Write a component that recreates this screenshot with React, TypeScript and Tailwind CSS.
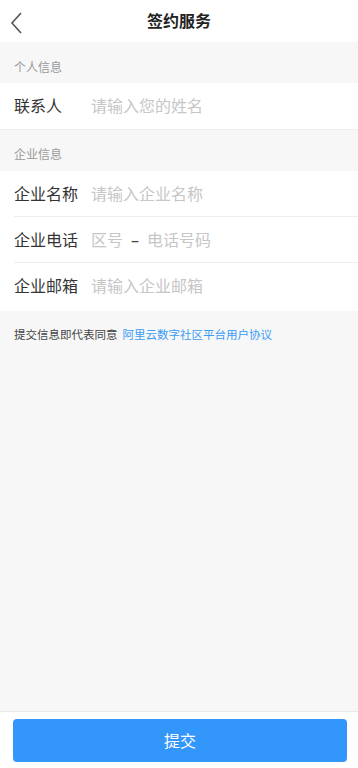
import React from "react";

const font = { fontFamily: '"Noto Sans", "Noto Sans CJK SC", sans-serif' };

function Row({ label, placeholder, divider = true }: { label: string; placeholder: React.ReactNode; divider?: boolean }) {
  return (
    <div className="pl-[14px]">
      <div className={`flex items-center h-[46px] ${divider ? "border-b border-[#eeeeee]" : ""}`}>
        <div className="w-[77px] text-[16px] text-[#333333]">{label}</div>
        <div className="text-[16px] text-[#c6c6c6]">{placeholder}</div>
      </div>
    </div>
  );
}

export default function App() {
  return (
    <div className="w-[358px] h-[768px] flex flex-col bg-[#f7f7f7]" style={font}>
      <div className="relative h-[42px] bg-white flex items-center justify-center shrink-0">
        <svg className="absolute left-[9px] top-[11px]" width="16" height="24" viewBox="0 0 16 24" fill="none">
          <path d="M12 2 L3 12 L12 22" stroke="#555555" strokeWidth="1.6" />
        </svg>
        <span className="text-[16px] font-bold text-[#222222]">签约服务</span>
      </div>
      <div className="h-[41px] flex items-center pl-[14px] pt-[10px] text-[12px] text-[#999999]">个人信息</div>
      <div className="bg-white">
        <Row label="联系人" placeholder="请输入您的姓名" divider={false} />
      </div>
      <div className="h-[42px] flex items-center pl-[14px] pt-[8px] text-[12px] text-[#999999] border-t border-[#eeeeee]">企业信息</div>
      <div className="bg-white pb-[2px]">
        <Row label="企业名称" placeholder="请输入企业名称" />
        <Row
          label="企业电话"
          placeholder={
            <span className="flex items-center">
              <span>区号</span>
              <span className="mx-[8px] text-[#444444]">–</span>
              <span>电话号码</span>
            </span>
          }
        />
        <Row label="企业邮箱" placeholder="请输入企业邮箱" divider={false} />
      </div>
      <div className="pl-[14px] pt-[15px] text-[11.5px] flex gap-[5px]">
        <span className="text-[#444444]">提交信息即代表同意</span>
        <span className="text-[#3a9bf6]">阿里云数字社区平台用户协议</span>
      </div>
      <div className="flex-1" />
      <div className="h-[57px] bg-white border-t border-[#eaeaea] pl-[13px] pr-[11px] pt-[7px] shrink-0">
        <button className="w-full h-[43px] rounded-[4px] bg-[#3396fb] text-white text-[16px]">提交</button>
      </div>
    </div>
  );
}
